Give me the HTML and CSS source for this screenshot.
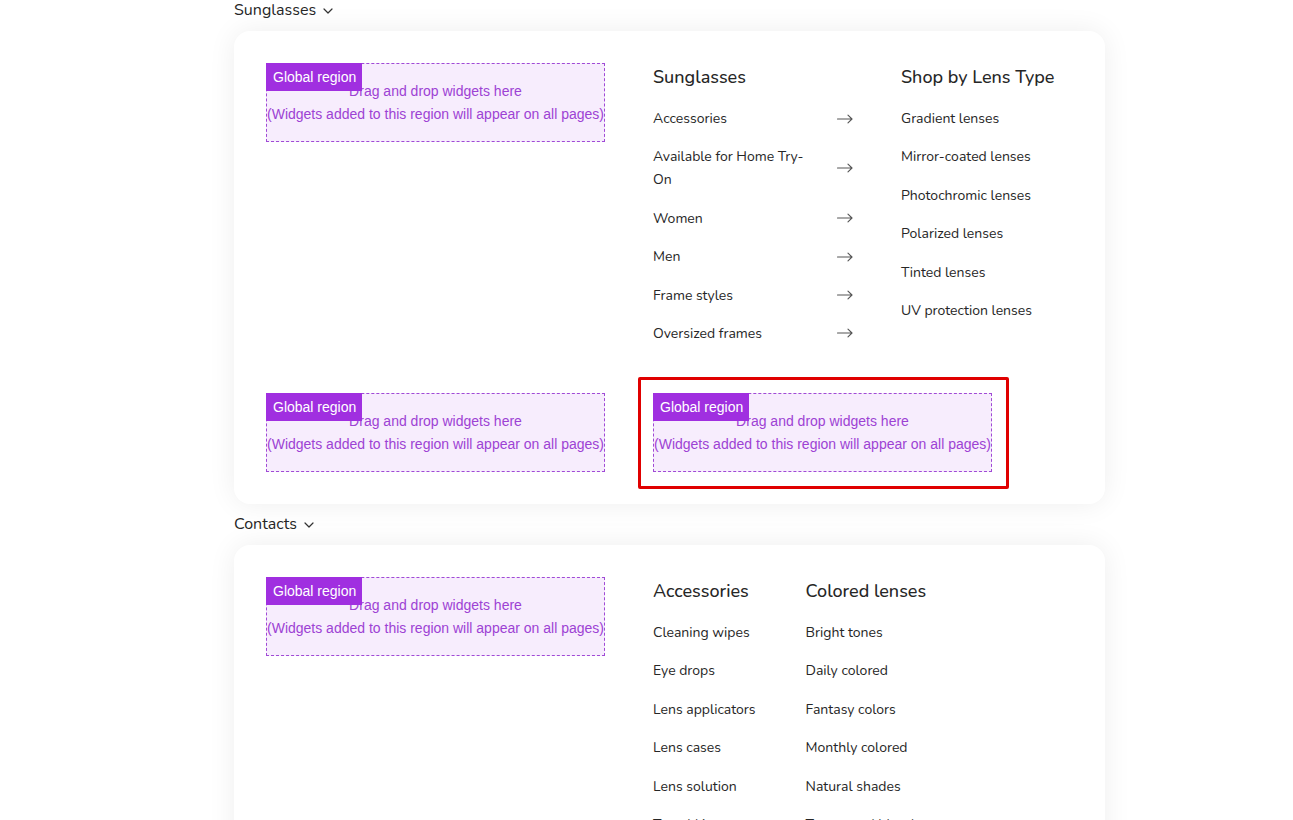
FILE: index.html
```html
<!DOCTYPE html>
<html lang="en">
<head>
<meta charset="utf-8">
<title>Mega menu regions</title>
<link rel="stylesheet" href="styles.css">
</head>
<body>
<div class="page">
  <section class="section">
    <h2 class="section-title">Sunglasses <svg class="chev" width="10" height="6" viewBox="0 0 10 6"><path d="M1 1l4 4 4-4" fill="none" stroke="#333" stroke-width="1.2" stroke-linecap="round" stroke-linejoin="round"/></svg></h2>
    <div class="card">
      <div class="grid grid-arrows">
        <div class="region">
          <span class="region-label">Global region</span>
          <p>Drag and drop widgets here</p>
          <p>(Widgets added to this region will appear on all pages)</p>
        </div>
        <div class="col">
          <h3 class="col-title">Sunglasses</h3>
          <ul class="list">
            <li class="item"><span>Accessories</span><svg class="arrow" width="16" height="10" viewBox="0 0 16 10"><path d="M0.5 5h14.5M11 1.2l4 3.8-4 3.8" fill="none" stroke="#555" stroke-width="1.1" stroke-linecap="round" stroke-linejoin="round"/></svg></li>
            <li class="item"><span>Available for Home Try-On</span><svg class="arrow" width="16" height="10" viewBox="0 0 16 10"><path d="M0.5 5h14.5M11 1.2l4 3.8-4 3.8" fill="none" stroke="#555" stroke-width="1.1" stroke-linecap="round" stroke-linejoin="round"/></svg></li>
            <li class="item"><span>Women</span><svg class="arrow" width="16" height="10" viewBox="0 0 16 10"><path d="M0.5 5h14.5M11 1.2l4 3.8-4 3.8" fill="none" stroke="#555" stroke-width="1.1" stroke-linecap="round" stroke-linejoin="round"/></svg></li>
            <li class="item"><span>Men</span><svg class="arrow" width="16" height="10" viewBox="0 0 16 10"><path d="M0.5 5h14.5M11 1.2l4 3.8-4 3.8" fill="none" stroke="#555" stroke-width="1.1" stroke-linecap="round" stroke-linejoin="round"/></svg></li>
            <li class="item"><span>Frame styles</span><svg class="arrow" width="16" height="10" viewBox="0 0 16 10"><path d="M0.5 5h14.5M11 1.2l4 3.8-4 3.8" fill="none" stroke="#555" stroke-width="1.1" stroke-linecap="round" stroke-linejoin="round"/></svg></li>
            <li class="item"><span>Oversized frames</span><svg class="arrow" width="16" height="10" viewBox="0 0 16 10"><path d="M0.5 5h14.5M11 1.2l4 3.8-4 3.8" fill="none" stroke="#555" stroke-width="1.1" stroke-linecap="round" stroke-linejoin="round"/></svg></li>
          </ul>
        </div>
        <div class="col">
          <h3 class="col-title">Shop by Lens Type</h3>
          <ul class="list">
            <li class="item">Gradient lenses</li>
            <li class="item">Mirror-coated lenses</li>
            <li class="item">Photochromic lenses</li>
            <li class="item">Polarized lenses</li>
            <li class="item">Tinted lenses</li>
            <li class="item">UV protection lenses</li>
          </ul>
        </div>
        <div class="region">
          <span class="region-label">Global region</span>
          <p>Drag and drop widgets here</p>
          <p>(Widgets added to this region will appear on all pages)</p>
        </div>
        <div class="region selected span-rest">
          <span class="region-label">Global region</span>
          <p>Drag and drop widgets here</p>
          <p>(Widgets added to this region will appear on all pages)</p>
        </div>
      </div>
    </div>
  </section>

  <section class="section">
    <h2 class="section-title">Contacts <svg class="chev" width="10" height="6" viewBox="0 0 10 6"><path d="M1 1l4 4 4-4" fill="none" stroke="#333" stroke-width="1.2" stroke-linecap="round" stroke-linejoin="round"/></svg></h2>
    <div class="card">
      <div class="grid grid-plain">
        <div class="region">
          <span class="region-label">Global region</span>
          <p>Drag and drop widgets here</p>
          <p>(Widgets added to this region will appear on all pages)</p>
        </div>
        <div class="col">
          <h3 class="col-title">Accessories</h3>
          <ul class="list">
            <li class="item">Cleaning wipes</li>
            <li class="item">Eye drops</li>
            <li class="item">Lens applicators</li>
            <li class="item">Lens cases</li>
            <li class="item">Lens solution</li>
            <li class="item">Travel kits</li>
          </ul>
        </div>
        <div class="col">
          <h3 class="col-title">Colored lenses</h3>
          <ul class="list">
            <li class="item">Bright tones</li>
            <li class="item">Daily colored</li>
            <li class="item">Fantasy colors</li>
            <li class="item">Monthly colored</li>
            <li class="item">Natural shades</li>
            <li class="item">Two-toned blends</li>
          </ul>
        </div>
      </div>
    </div>
  </section>
</div>
</body>
</html>
```

FILE: styles.css
```css
html, body {
  margin: 0;
  padding: 0;
  background: #ffffff;
}
body {
  font-family: "Nunito", "Noto Sans", "Liberation Sans", sans-serif;
  color: #262626;
  overflow: hidden;
}
.page {
  width: 871px;
  margin-left: 234px;
}
.section-title {
  margin: 0 0 11px;
  font-size: 16px;
  line-height: 20px;
  font-weight: 400;
  color: #262626;
  display: flex;
  align-items: center;
  gap: 7px;
}
.chev {
  margin-top: 2px;
}
.card {
  background: #fff;
  border-radius: 16px;
  box-shadow: 0 0 28px rgba(0, 0, 0, 0.07);
  padding: 32px;
  margin-bottom: 10px;
}
.grid {
  display: grid;
  column-gap: 48px;
  row-gap: 48px;
  align-items: start;
}
.grid-arrows {
  grid-template-columns: 339px 200px 1fr;
}
.grid-plain {
  grid-template-columns: 339px auto 1fr;
}
.grid-plain .col + .col {
  margin-left: 2px;
}
.span-rest {
  grid-column: 2 / span 2;
  width: 337px;
}
.region {
  position: relative;
  border: 1px dashed #a04ad6;
  background: #f7edfd;
  padding: 16px 0 15px;
  text-align: center;
  font-family: "Liberation Sans", Arial, sans-serif;
  font-size: 14px;
  line-height: 23px;
  color: #9d42d4;
  white-space: nowrap;
}
.region p {
  margin: 0;
}
.region-label {
  position: absolute;
  top: -1px;
  left: -1px;
  background: #a02fe0;
  color: #fff;
  height: 28px;
  line-height: 29px;
  padding: 0 6px 0 7px;
  font-size: 14px;
}
.region.selected::after {
  content: "";
  position: absolute;
  top: -17px;
  left: -16px;
  right: -18px;
  bottom: -18px;
  border: 3px solid #e00000;
  border-radius: 2px;
  pointer-events: none;
}
.col-title {
  margin: 0 0 16px;
  font-size: 18px;
  line-height: 28px;
  font-weight: 500;
  color: #262626;
}
.list {
  list-style: none;
  margin: 0;
  padding: 0;
  display: flex;
  flex-direction: column;
  gap: 15.4px;
}
.item {
  font-size: 14px;
  line-height: 23px;
  color: #262626;
  display: flex;
  align-items: center;
  justify-content: space-between;
  gap: 16px;
}
.arrow {
  flex: none;
}
```
